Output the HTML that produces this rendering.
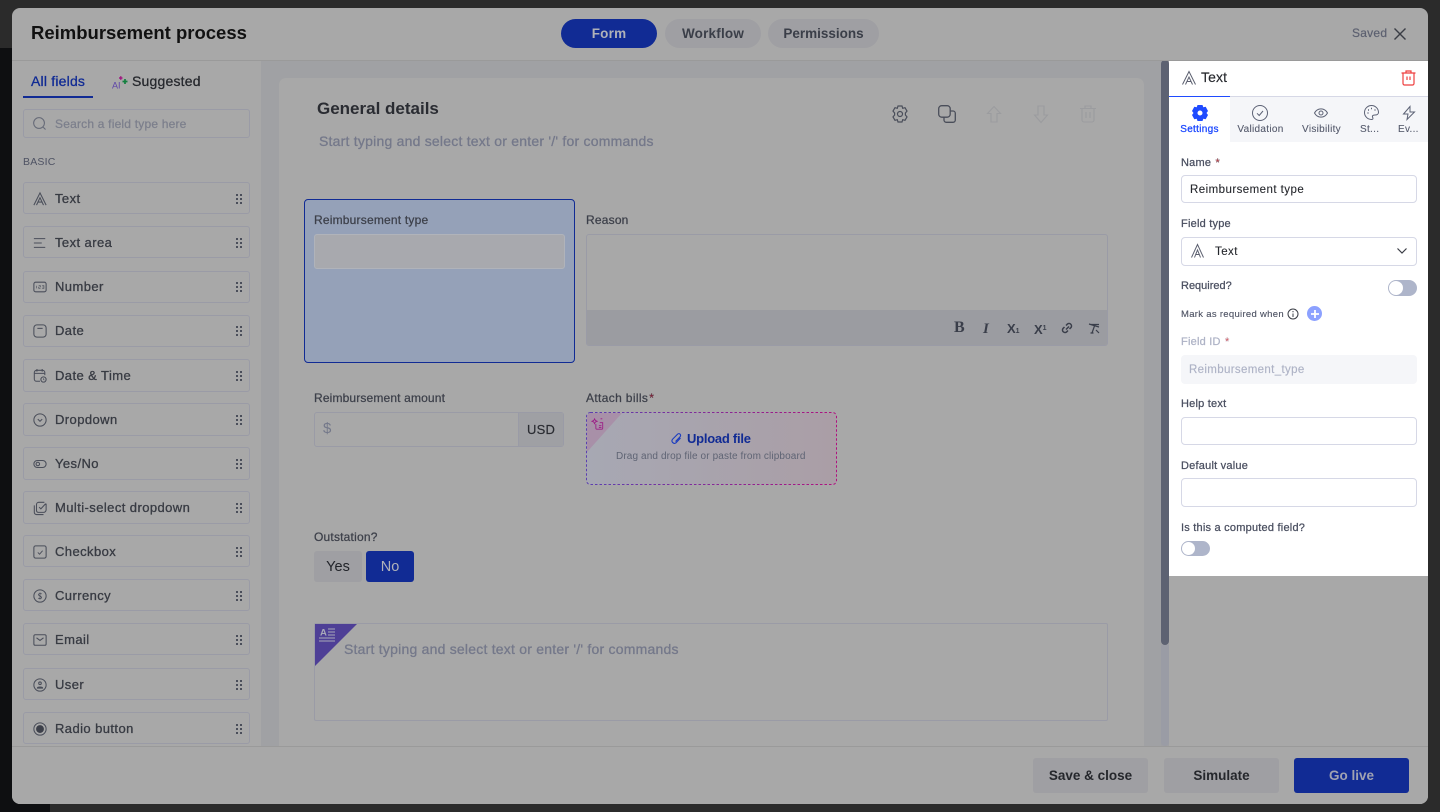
<!DOCTYPE html>
<html><head><meta charset="utf-8"><style>
html,body{margin:0;padding:0;width:1440px;height:812px;overflow:hidden;background:#2b2b2b;font-family:"Liberation Sans",sans-serif}
*{box-sizing:border-box}
.a{position:absolute}
.t{position:absolute;white-space:nowrap;line-height:16px}
.item{position:absolute;left:23px;width:227px;height:32px;border:1px solid #9a9ba6;border-radius:3px}
.item .t{left:31px;top:8px;font-size:13px;color:#383b43;letter-spacing:.42px;-webkit-text-stroke:.3px #383b43}
.item svg.i{position:absolute;left:9px;top:9px;width:14px;height:14px;fill:none;stroke:#4a4e5a;stroke-width:1.2}
.item svg.d{position:absolute;left:212px;top:11px;width:6px;height:10px;fill:#4a4e5a}
.item.n .t{top:7px}
.item.n svg.i{top:8px}
.item.n svg.d{top:10px}
.lab{font-size:12px;color:#3d404a;letter-spacing:.2px;-webkit-text-stroke:.25px #3d404a}
.rl{font-size:11px;color:#4a4f60;letter-spacing:.22px;-webkit-text-stroke:.25px #4a4f60}
.inp{position:absolute;left:1181px;width:236px;background:#fff;border:1px solid #d6d8e6;border-radius:4px}
.tab{font-size:10px;color:#555a6c;letter-spacing:.3px;text-align:center;-webkit-text-stroke:.1px #555a6c}
.pill{position:absolute;top:19px;height:29px;border-radius:15px;text-align:center;line-height:29px;font-size:13.5px;font-weight:bold;background:#9f9fa3;color:#3a3e48;letter-spacing:.2px}
.btn{position:absolute;top:758px;height:35px;width:115px;border-radius:3px;text-align:center;line-height:35px;font-size:13.5px;font-weight:bold;background:#9f9fa3;color:#25272c}
svg{display:block;overflow:visible}
</style></head><body>
<div class="a" style="left:0;top:48px;width:50px;height:764px;background:#0e0f11"></div>
<div class="a" style="left:12px;top:8px;width:1416px;height:796px;background:#a8a8a8;border-radius:8px;overflow:hidden"></div>

<!-- canvas -->
<div class="a" style="left:261px;top:61px;width:908px;height:685px;background:#a0a1a4"></div>
<div class="a" style="left:279px;top:78px;width:865px;height:668px;background:#a8a8a8;border-radius:7px 7px 0 0"></div>
<div class="a" style="left:1161px;top:60px;width:8px;height:686px;background:#9e9fa3"></div>
<div class="a" style="left:1161px;top:60px;width:8px;height:585px;background:#5d6272;border-radius:4px"></div>
<div class="a" style="left:1161px;top:645px;width:8px;height:101px;background:#9a9ca5;border-radius:0 0 4px 4px"></div>

<!-- header -->
<div class="a" style="left:12px;top:60px;width:1416px;height:1px;background:#9a9a9a"></div>
<div class="t" style="left:31px;top:22px;font-size:18.500px;line-height:22px;font-weight:bold;color:#111">Reimbursement process</div>
<div class="pill" style="left:561px;width:96px;background:#112b94;color:#b0b2b9">Form</div>
<div class="pill" style="left:665px;width:96px">Workflow</div>
<div class="pill" style="left:768px;width:111px;letter-spacing:0">Permissions</div>
<div class="t" style="left:1352px;top:25px;font-size:12px;color:#5c6070;letter-spacing:.25px;-webkit-text-stroke:.2px #5c6070">Saved</div>
<svg class="a" style="left:1394px;top:28px;width:12px;height:12px" viewBox="0 0 12 12" fill="none" stroke="#3a3d45" stroke-width="1.4"><path d="M.5.5l11 11M11.500.5l-11 11"/></svg>

<!-- left -->
<div class="t" style="left:31px;top:73px;font-size:14px;color:#112b94;-webkit-text-stroke:.3px #112b94;letter-spacing:.2px">All fields</div>
<div class="a" style="left:23px;top:96px;width:70px;height:2px;background:#112b94"></div>
<svg class="a" style="left:111px;top:75px;width:17px;height:15px" viewBox="0 0 17 15"><text x="1" y="13.500" font-size="9" font-family="Liberation Sans" fill="#5e45a8">AI</text><path d="M8 3h3.500M9.750 1.200v3.600" stroke="#a01a80" stroke-width="1.500"/><path d="M11.500 6.500h5M14 4v5" stroke="#13803f" stroke-width="1.700"/></svg>
<div class="t" style="left:132px;top:73px;font-size:14px;color:#25272c;letter-spacing:.2px;-webkit-text-stroke:.25px #25272c">Suggested</div>
<div class="a" style="left:23px;top:109px;width:227px;height:29px;border:1px solid #9a9ba6;border-radius:3px"></div>
<svg class="a" style="left:33px;top:117px;width:13px;height:13px" viewBox="0 0 14 14" fill="none" stroke="#646876" stroke-width="1.1"><circle cx="6.500" cy="6.500" r="5.800"/><path d="M11 11l2.500 2.500"/></svg>
<div class="t" style="left:55px;top:116px;font-size:12px;color:#7c7f8c;letter-spacing:.2px;-webkit-text-stroke:.25px #7c7f8c">Search a field type here</div>
<div class="t" style="left:23px;top:154px;font-size:10.500px;color:#4e5263;letter-spacing:.2px">BASIC</div>

<div class="item" style="top:182px"><svg class="i" viewBox="0 0 16 16"><path d="M1 15L8 1l7 14M4 15L8 6.500 12 15M5.500 11.500h5"/></svg><span class="t">Text</span><svg class="d" viewBox="0 0 7.500 12.500"><path d="M0 0h2.500v2.500H0zM5 0h2.500v2.500H5zM0 5h2.500v2.500H0zM5 5h2.500v2.500H5zM0 10h2.500v2.500H0zM5 10h2.500v2.500H5z"/></svg></div>
<div class="item" style="top:226px"><svg class="i" viewBox="0 0 16 16"><path d="M1 3h13M1 8h9M1 13h13"/></svg><span class="t">Text area</span><svg class="d" viewBox="0 0 7.500 12.500"><path d="M0 0h2.500v2.500H0zM5 0h2.500v2.500H5zM0 5h2.500v2.500H0zM5 5h2.500v2.500H5zM0 10h2.500v2.500H0zM5 10h2.500v2.500H5z"/></svg></div>
<div class="item n" style="top:271px"><svg class="i" viewBox="0 0 16 16"><rect x="1" y="2.500" width="14" height="11" rx="2"/><path d="M4 6.500v3M6.500 6.500h2v1.500h-2v1.500h2M10.500 6.500h2v3h-2M10.500 8h2" stroke-width=".7"/></svg><span class="t">Number</span><svg class="d" viewBox="0 0 7.500 12.500"><path d="M0 0h2.500v2.500H0zM5 0h2.500v2.500H5zM0 5h2.500v2.500H0zM5 5h2.500v2.500H5zM0 10h2.500v2.500H0zM5 10h2.500v2.500H5z"/></svg></div>
<div class="item n" style="top:315px"><svg class="i" viewBox="0 0 16 16"><rect x="1" y="1" width="14" height="14" rx="3.500"/><path d="M5 5h6"/></svg><span class="t">Date</span><svg class="d" viewBox="0 0 7.500 12.500"><path d="M0 0h2.500v2.500H0zM5 0h2.500v2.500H5zM0 5h2.500v2.500H0zM5 5h2.500v2.500H5zM0 10h2.500v2.500H0zM5 10h2.500v2.500H5z"/></svg></div>
<div class="item" style="top:359px;height:33px"><svg class="i" viewBox="0 0 16 16"><path d="M8 14H4a2.500 2.500 0 0 1-2.500-2.500V4A2.500 2.500 0 0 1 4 1.500h7A2.500 2.500 0 0 1 13.500 4v3M1.500 5h12M4.500 0v3M10.500 0v3"/><circle cx="12" cy="12" r="3"/><path d="M12 10.500V12l1 .7" stroke-width=".8"/></svg><span class="t">Date &amp; Time</span><svg class="d" viewBox="0 0 7.500 12.500"><path d="M0 0h2.500v2.500H0zM5 0h2.500v2.500H5zM0 5h2.500v2.500H0zM5 5h2.500v2.500H5zM0 10h2.500v2.500H0zM5 10h2.500v2.500H5z"/></svg></div>
<div class="item" style="top:403px;height:33px"><svg class="i" viewBox="0 0 16 16"><circle cx="8" cy="8" r="7"/><path d="M5.500 7l2.500 2.500L10.500 7"/></svg><span class="t">Dropdown</span><svg class="d" viewBox="0 0 7.500 12.500"><path d="M0 0h2.500v2.500H0zM5 0h2.500v2.500H5zM0 5h2.500v2.500H0zM5 5h2.500v2.500H5zM0 10h2.500v2.500H0zM5 10h2.500v2.500H5z"/></svg></div>
<div class="item" style="top:447px;height:33px"><svg class="i" viewBox="0 0 16 16"><rect x="1" y="4" width="14" height="8" rx="4"/><circle cx="5.500" cy="8" r="2"/></svg><span class="t">Yes/No</span><svg class="d" viewBox="0 0 7.500 12.500"><path d="M0 0h2.500v2.500H0zM5 0h2.500v2.500H5zM0 5h2.500v2.500H0zM5 5h2.500v2.500H5zM0 10h2.500v2.500H0zM5 10h2.500v2.500H5z"/></svg></div>
<div class="item" style="top:491px;height:33px"><svg class="i" viewBox="0 0 16 16"><path d="M15 3v7a3 3 0 0 1-3 3H6a2 2 0 0 1-2-2V4a2.500 2.500 0 0 1 2.500-2.500H13M1.500 5v8a2.500 2.500 0 0 0 2.500 2.500h8M7 7l2 2 5.500-6"/></svg><span class="t">Multi-select dropdown</span><svg class="d" viewBox="0 0 7.500 12.500"><path d="M0 0h2.500v2.500H0zM5 0h2.500v2.500H5zM0 5h2.500v2.500H0zM5 5h2.500v2.500H5zM0 10h2.500v2.500H0zM5 10h2.500v2.500H5z"/></svg></div>
<div class="item" style="top:535px"><svg class="i" viewBox="0 0 16 16"><rect x="1" y="1" width="14" height="14" rx="2"/><path d="M5.500 8.500L7.500 10.500 11 6.500" stroke-width="1"/></svg><span class="t">Checkbox</span><svg class="d" viewBox="0 0 7.500 12.500"><path d="M0 0h2.500v2.500H0zM5 0h2.500v2.500H5zM0 5h2.500v2.500H0zM5 5h2.500v2.500H5zM0 10h2.500v2.500H0zM5 10h2.500v2.500H5z"/></svg></div>
<div class="item" style="top:579px"><svg class="i" viewBox="0 0 16 16"><circle cx="8" cy="8" r="7"/><path d="M10 5.800C9.500 5 7 4.700 6.300 6c-.8 2 3.800 2 3.500 4-.5 1.500-3 1.200-3.800.3M8 4v8" stroke-width=".9"/></svg><span class="t">Currency</span><svg class="d" viewBox="0 0 7.500 12.500"><path d="M0 0h2.500v2.500H0zM5 0h2.500v2.500H5zM0 5h2.500v2.500H0zM5 5h2.500v2.500H5zM0 10h2.500v2.500H0zM5 10h2.500v2.500H5z"/></svg></div>
<div class="item" style="top:623px"><svg class="i" viewBox="0 0 16 16"><rect x="1" y="2" width="14" height="12" rx="1.500"/><path d="M4 5.500l4 3 4-3"/></svg><span class="t">Email</span><svg class="d" viewBox="0 0 7.500 12.500"><path d="M0 0h2.500v2.500H0zM5 0h2.500v2.500H5zM0 5h2.500v2.500H0zM5 5h2.500v2.500H5zM0 10h2.500v2.500H0zM5 10h2.500v2.500H5z"/></svg></div>
<div class="item" style="top:668px"><svg class="i" viewBox="0 0 16 16"><circle cx="8" cy="8" r="7"/><circle cx="8" cy="6" r="1.500"/><path d="M5 11.500c0-1.500 6-1.500 6 0z"/></svg><span class="t">User</span><svg class="d" viewBox="0 0 7.500 12.500"><path d="M0 0h2.500v2.500H0zM5 0h2.500v2.500H5zM0 5h2.500v2.500H0zM5 5h2.500v2.500H5zM0 10h2.500v2.500H0zM5 10h2.500v2.500H5z"/></svg></div>
<div class="item" style="top:712px"><svg class="i" viewBox="0 0 16 16"><circle cx="8" cy="8" r="7"/><circle cx="8" cy="8" r="4.500" fill="#3d404a" stroke="none"/></svg><span class="t">Radio button</span><svg class="d" viewBox="0 0 7.500 12.500"><path d="M0 0h2.500v2.500H0zM5 0h2.500v2.500H5zM0 5h2.500v2.500H0zM5 5h2.500v2.500H5zM0 10h2.500v2.500H0zM5 10h2.500v2.500H5z"/></svg></div>

<!-- card head -->
<div class="t" style="left:317px;top:99px;font-size:17px;line-height:20px;font-weight:bold;color:#2a2c32">General details</div>
<div class="t" style="left:319px;top:133px;font-size:14px;color:#74788a;letter-spacing:.22px;-webkit-text-stroke:.3px #74788a">Start typing and select text or enter '/' for commands</div>
<svg class="a" style="left:891px;top:105px;width:18px;height:18px" viewBox="0 0 18 18" fill="none" stroke="#4a4e5a" stroke-width="1.200"><path d="M7 1h4l.7 2.300 2.300-.6 2 3.400L14.400 8v2l1.600 1.900-2 3.400-2.300-.6L11 17H7l-.7-2.300-2.300.6-2-3.400L3.600 10V8L2 6.100l2-3.400 2.300.6z"/><circle cx="9" cy="9" r="2.500"/></svg>
<svg class="a" style="left:938px;top:105px;width:18px;height:18px" viewBox="0 0 18 18" fill="none" stroke="#4a4e5a" stroke-width="1.300"><rect x=".7" y=".7" width="11.500" height="11.500" rx="3"/><path d="M12.200 6H15a2.300 2.300 0 0 1 2.300 2.300V15a2.300 2.300 0 0 1-2.300 2.300H8.300A2.300 2.300 0 0 1 6 15v-2.800"/></svg>
<svg class="a" style="left:987px;top:106px;width:14px;height:17px" viewBox="0 0 14 17" fill="none" stroke="#9b9c9f" stroke-width="1.100"><path d="M7 .5L13.500 7.500H10V16H4V7.500H.5z"/></svg>
<svg class="a" style="left:1034px;top:105px;width:14px;height:18px" viewBox="0 0 14 18" fill="none" stroke="#9b9c9f" stroke-width="1.100"><path d="M7 17.500L.5 10H4V1h6v9h3.500z"/></svg>
<svg class="a" style="left:1080px;top:105px;width:16px;height:18px" viewBox="0 0 16 18" fill="none" stroke="#9b9c9f" stroke-width="1.100"><path d="M0 3.500h16M5 3.500V1h6v2.500M2 3.500V15a2 2 0 0 0 2 2h8a2 2 0 0 0 2-2V3.500M6 7v6M10 7v6"/></svg>

<!-- selected field -->
<div class="a" style="left:304px;top:199px;width:271px;height:164px;background:#95a1b8;border:1px solid #112b94;border-radius:4px"></div>
<div class="t lab" style="left:314px;top:212px">Reimbursement type</div>
<div class="a" style="left:314px;top:234px;width:251px;height:35px;background:#a8a9ae;border:1px solid #b0b3ba;border-radius:3px"></div>

<div class="t lab" style="left:586px;top:212px">Reason</div>
<div class="a" style="left:586px;top:234px;width:522px;height:112px;border:1px solid #9a9ba6;border-radius:3px;overflow:hidden"><div class="a" style="left:0;top:75px;width:520px;height:36px;background:#9b9ca1"></div></div>
<div class="t" style="left:954px;top:320px;font-family:'Liberation Serif',serif;font-size:16px;font-weight:bold;color:#3a3e4a">B</div>
<div class="t" style="left:983px;top:321px;font-family:'Liberation Serif',serif;font-size:15px;font-style:italic;font-weight:bold;color:#3a3e4a">I</div>
<div class="t" style="left:1007px;top:321px;font-size:13px;font-weight:bold;color:#3a3e4a">X<span style="font-size:7px">1</span></div>
<div class="t" style="left:1034px;top:321px;font-size:13px;font-weight:bold;color:#3a3e4a">X<span style="font-size:7px;vertical-align:4px">1</span></div>
<svg class="a" style="left:1061px;top:322px;width:12px;height:12px" viewBox="0 0 12 12" fill="none" stroke="#3a3e4a" stroke-width="1.500"><path d="M5 7.500L8 4.500M5 3.500l1.500-1.500a2.500 2.500 0 0 1 3.500 3.500L8.500 7M7 8.500L5.500 10A2.500 2.500 0 0 1 2 6.500L3.500 5"/></svg>
<svg class="a" style="left:1088px;top:323px;width:12px;height:11px" viewBox="0 0 12 11" fill="none" stroke="#3a3e4a" stroke-width="1.200"><path d="M1 1l10 3M3 1.500h8M7 1.500L4 10M2.500 10h3M8 7l3 3"/></svg>

<div class="t lab" style="left:314px;top:390px;letter-spacing:.15px">Reimbursement amount</div>
<div class="a" style="left:314px;top:412px;width:250px;height:35px;border:1px solid #9a9ba6;border-radius:3px"><div class="a" style="left:203px;top:0;width:45px;height:33px;background:#9fa0a4;border-left:1px solid #9a9ba6"></div></div>
<div class="t" style="left:323px;top:421px;font-size:15px;color:#74788a">$</div>
<div class="t" style="left:527px;top:422px;font-size:13px;color:#2a2c32;letter-spacing:.2px;-webkit-text-stroke:.2px #2a2c32">USD</div>

<div class="t lab" style="left:586px;top:390px;letter-spacing:.35px">Attach bills<span style="color:#a3122e;margin-left:1px">*</span></div>
<svg class="a" style="left:586px;top:412px;width:251px;height:73px" viewBox="0 0 251 73"><defs><linearGradient id="g" x1="0" x2="1" y1="0" y2="0"><stop offset="0" stop-color="#a7a8b3"/><stop offset="1" stop-color="#aa9ea6"/></linearGradient><linearGradient id="s" x1="0" x2="1"><stop offset="0" stop-color="#5b3fb0"/><stop offset="1" stop-color="#b0107f"/></linearGradient></defs><rect x=".5" y=".5" width="250" height="72" rx="4" fill="url(#g)" stroke="url(#s)" stroke-dasharray="2.500 2"/><path d="M1 5a4 4 0 0 1 4-4h31L1 40z" fill="#a890a8"/></svg>
<svg class="a" style="left:592px;top:418px;width:12px;height:12px" viewBox="0 0 14 14" fill="none" stroke="#9c1a85" stroke-width="1"><path d="M4.500 7v5a1 1 0 0 0 1 1h6a1 1 0 0 0 1-1V5.500H9M3 1l1 2 2 .8-2 .8-1 2-1-2-2-.8 2-.8zM8 9h3M8 11h3M10 1h2"/></svg>
<svg class="a" style="left:671px;top:433px;width:11px;height:12px" viewBox="0 0 11 12" fill="none" stroke="#1a3bbf" stroke-width="1.100"><path d="M9.500 5L5 9.800A2.500 2.500 0 0 1 1.500 6.300L6.500 1.200a1.800 1.800 0 0 1 2.600 2.500L4.500 8.500"/></svg>
<div class="t" style="left:687px;top:431px;font-size:13px;font-weight:bold;color:#112b94;letter-spacing:-.25px">Upload file</div>
<div class="t" style="left:616px;top:450px;font-size:10px;line-height:14px;color:#5f6474;letter-spacing:.12px">Drag and drop file or paste from clipboard</div>

<div class="t lab" style="left:314px;top:529px">Outstation?</div>
<div class="a" style="left:314px;top:551px;width:48px;height:31px;border-radius:3px;background:#9f9fa3;text-align:center;line-height:33px;font-size:14.500px;color:#22242a">Yes</div>
<div class="a" style="left:366px;top:551px;width:48px;height:31px;border-radius:3px;background:#112b94;text-align:center;line-height:33px;font-size:14.500px;color:#b0b2b9">No</div>

<div class="a" style="left:314px;top:623px;width:794px;height:98px;border:1px solid #9a9ba6;border-radius:2px"></div>
<svg class="a" style="left:315px;top:624px;width:43px;height:42px" viewBox="0 0 43 42"><path d="M0 0H42L0 42z" fill="#4e3f96"/><text x="5" y="11.500" font-size="9.500" font-weight="bold" font-family="Liberation Sans" fill="#a8a8b8">A</text><path d="M13 5h7M13 8h7M13 11h7M4 14h16M4 17h16" stroke="#a8a8b8" stroke-width="1"/></svg>
<div class="t" style="left:344px;top:641px;font-size:14px;color:#74788a;letter-spacing:.22px;-webkit-text-stroke:.3px #74788a">Start typing and select text or enter '/' for commands</div>

<!-- footer -->
<div class="a" style="left:12px;top:746px;width:1416px;height:58px;background:#a8a8a8;border-top:1px solid #9a9a9a;border-radius:0 0 8px 8px"></div>
<div class="btn" style="left:1033px">Save &amp; close</div>
<div class="btn" style="left:1164px">Simulate</div>
<div class="btn" style="left:1294px;background:#112b94;color:#a0a3b2">Go live</div>

<!-- right panel -->
<div class="a" style="left:1169px;top:61px;width:259px;height:515px;background:#fff"></div>
<div class="a" style="left:1169px;top:96px;width:259px;height:46px;background:#f5f6f9;border-top:1px solid #d6d8e6"></div>
<div class="a" style="left:1169px;top:96px;width:61px;height:46px;background:#fff;border-top:1px solid #1f4bff"></div>
<svg class="a" style="left:1182px;top:71px;width:14px;height:14px" viewBox="0 0 14 14" fill="none" stroke="#5c6070" stroke-width="1"><path d="M.5 13.500L7 .5l6.500 13M3.500 13.500L7 6l3.500 7.500M4.800 10.500h4.400"/></svg>
<div class="t" style="left:1201px;top:69px;font-size:14px;color:#25272c;letter-spacing:.1px;-webkit-text-stroke:.15px #25272c">Text</div>
<svg class="a" style="left:1401px;top:70px;width:15px;height:16px" viewBox="0 0 15 16" fill="none" stroke="#ee3f3f" stroke-width="1.200"><path d="M.5 3h14M5 3V1h5v2M2 3v10.500A1.500 1.500 0 0 0 3.500 15h8a1.500 1.500 0 0 0 1.500-1.500V3M6 6.500v3.500M9 6.500v3.500"/></svg>

<svg class="a" style="left:1192px;top:105px;width:16px;height:16px" viewBox="0 0 16 16"><path fill="#1f4bff" fill-rule="evenodd" d="M5.500 0h5l.8 2.200 2.400-.4L16 6l-1.500 2 1.500 2-2.300 4.200-2.400-.4L10.500 16h-5l-.8-2.200-2.400.4L0 10l1.500-2L0 6l2.300-4.200 2.400.4zM8 5.500a2.500 2.500 0 1 0 0 5 2.500 2.500 0 0 0 0-5z"/></svg>
<div class="t tab" style="left:1169px;top:122px;width:61px;color:#1f4bff;-webkit-text-stroke:.3px #1f4bff">Settings</div>
<svg class="a" style="left:1252px;top:105px;width:16px;height:16px" viewBox="0 0 16 16" fill="none" stroke="#5c6275" stroke-width="1"><circle cx="8" cy="8" r="7.500"/><path d="M5 8.300L7.200 10.500 11 6"/></svg>
<div class="t tab" style="left:1230px;top:122px;width:61px">Validation</div>
<svg class="a" style="left:1314px;top:108px;width:14px;height:10px" viewBox="0 0 14 10" fill="none" stroke="#5c6275" stroke-width="1"><path d="M.5 5C3.500-.5 10.500-.5 13.500 5 10.500 10.500 3.500 10.500.5 5z"/><circle cx="7" cy="5" r="2"/></svg>
<div class="t tab" style="left:1291px;top:122px;width:61px">Visibility</div>
<svg class="a" style="left:1364px;top:105px;width:15px;height:15px" viewBox="0 0 15 15" fill="none" stroke="#5c6275" stroke-width="1"><path d="M7.500.5a7 7 0 0 0 0 14c2 0 1.500-1.500 1-2.500-.5-1.500 1-2 2.500-2 2 0 3.500-1 3.500-2.500A7 7 0 0 0 7.500.5z"/><path d="M4 5h1M3.500 8h1M7 3.500h1M10.500 5h1" stroke-width="1.400"/></svg>
<div class="t tab" style="left:1360px;top:122px">St...</div>
<svg class="a" style="left:1403px;top:106px;width:12px;height:14px" viewBox="0 0 12 14" fill="none" stroke="#5c6275" stroke-width="1"><path d="M7 .5L.5 8H5l-1 5.500L11.500 6H7z"/></svg>
<div class="t tab" style="left:1398px;top:122px">Ev...</div>

<div class="t rl" style="left:1181px;top:155px">Name <span style="color:#f03a3a;margin-left:1px">*</span></div>
<div class="inp" style="top:175px;height:28px"></div>
<div class="t" style="left:1190px;top:182px;font-size:11.500px;color:#25272c;letter-spacing:.45px;-webkit-text-stroke:.1px #25272c">Reimbursement type</div>
<div class="t rl" style="left:1181px;top:216px">Field type</div>
<div class="inp" style="top:237px;height:29px"></div>
<svg class="a" style="left:1191px;top:244px;width:13px;height:14px" viewBox="0 0 13 14" fill="none" stroke="#5c6070" stroke-width="1"><path d="M.5 13.500L6.500.5l6 13M3.500 13.500L6.500 6l3 7.500M4.500 10.500h4"/></svg>
<div class="t" style="left:1215px;top:244px;font-size:11.500px;color:#25272c;letter-spacing:.45px;-webkit-text-stroke:.1px #25272c">Text</div>
<svg class="a" style="left:1397px;top:248px;width:10px;height:6px" viewBox="0 0 10 6" fill="none" stroke="#3a3d45" stroke-width="1.200"><path d="M.5.500L5 5 9.500.5"/></svg>
<div class="t rl" style="left:1181px;top:278px;letter-spacing:0">Required?</div>
<div class="a" style="left:1388px;top:280px;width:29px;height:16px;border-radius:8px;background:#aeb5ca"><div class="a" style="left:1px;top:1px;width:14px;height:14px;border-radius:7px;background:#fff"></div></div>
<div class="t" style="left:1181px;top:307px;font-size:9.500px;color:#4a4f60;letter-spacing:.3px;-webkit-text-stroke:.1px #4a4f60">Mark as required when</div>
<svg class="a" style="left:1287px;top:308px;width:12px;height:12px" viewBox="0 0 12 12" fill="none" stroke="#3a3d45" stroke-width="1"><circle cx="6" cy="6" r="5"/><path d="M6 5.500V9M6 3v1.300"/></svg>
<div class="a" style="left:1307px;top:306px;width:15px;height:15px;border-radius:8px;background:#8ca1ff"></div>
<svg class="a" style="left:1310.500px;top:309.500px;width:8px;height:8px" viewBox="0 0 9 9" stroke="#fff" stroke-width="2"><path d="M0 4.500h9M4.500 0v9"/></svg>
<div class="t rl" style="left:1181px;top:334px;color:#aeb3c6;-webkit-text-stroke:.25px #aeb3c6">Field ID <span style="color:#f03a3a;margin-left:1px">*</span></div>
<div class="a" style="left:1181px;top:355px;width:236px;height:29px;background:#f5f6f9;border-radius:4px"></div>
<div class="t" style="left:1189px;top:362px;font-size:11.500px;color:#aeb3c6;letter-spacing:.35px;-webkit-text-stroke:.15px #aeb3c6">Reimbursement_type</div>
<div class="t rl" style="left:1181px;top:396px">Help text</div>
<div class="inp" style="top:417px;height:28px"></div>
<div class="t rl" style="left:1181px;top:458px">Default value</div>
<div class="inp" style="top:478px;height:29px"></div>
<div class="t rl" style="left:1181px;top:520px">Is this a computed field?</div>
<div class="a" style="left:1181px;top:541px;width:29px;height:15px;border-radius:8px;background:#aeb5ca"><div class="a" style="left:1px;top:1px;width:13px;height:13px;border-radius:7px;background:#fff"></div></div>
</body></html>
